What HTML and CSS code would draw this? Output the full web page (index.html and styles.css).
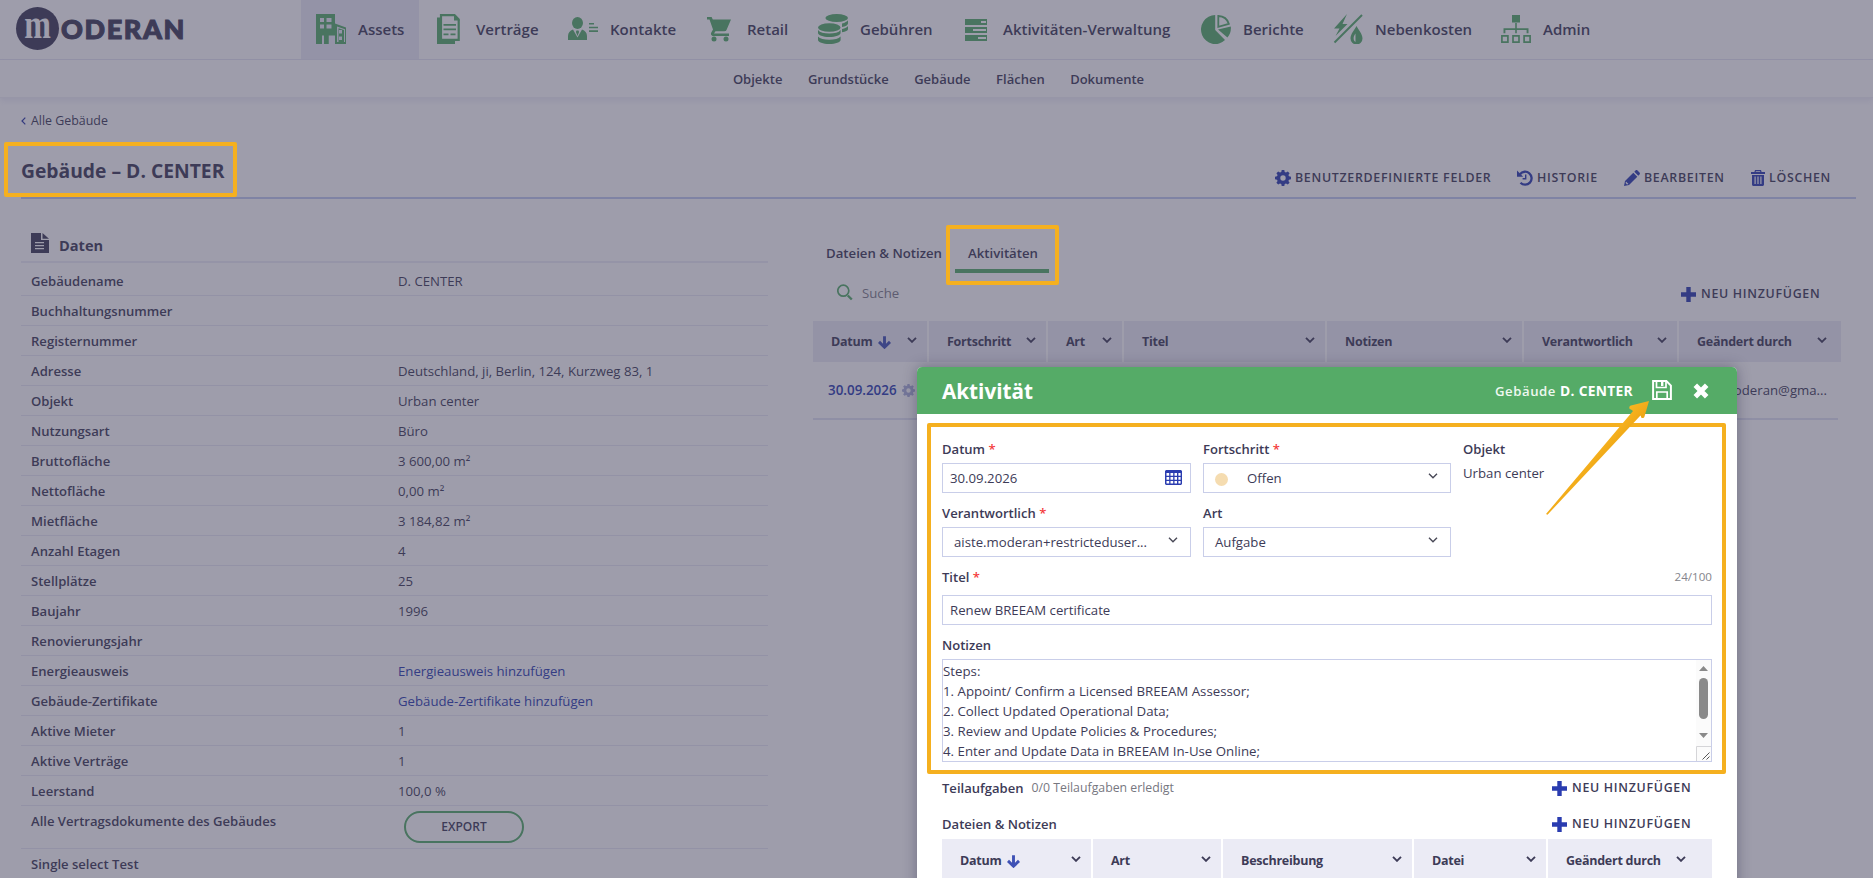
FILE: index.html
```html
<!DOCTYPE html>
<html lang="de">
<head>
<meta charset="utf-8">
<title>Gebäude – D. CENTER</title>
<link rel="stylesheet" href="styles.css">
</head>
<body>
<svg class="defs" aria-hidden="true">
  <symbol id="chev" viewBox="0 0 10 6"><path d="M1 .8l4 4 4-4" fill="none" stroke="currentColor" stroke-width="1.9"/></symbol>
  <symbol id="chev-thin" viewBox="0 0 10 6"><path d="M1 .8l4 4 4-4" fill="none" stroke="currentColor" stroke-width="1.4"/></symbol>
  <symbol id="plus" viewBox="0 0 15 15"><path d="M5.3 0h4.4v5.3H15v4.4H9.700V15H5.300V9.700H0V5.300h5.300z" fill="currentColor"/></symbol>
  <symbol id="down" viewBox="0 0 13 13"><path d="M6.500 0.300v10.500M1 5.900l5.500 5.300 5.500-5.300" fill="none" stroke="currentColor" stroke-width="2.900"/></symbol>
  <symbol id="gear" viewBox="0 0 16 16"><path fill="currentColor" fill-rule="evenodd" d="M6.700 0h2.600l.4 2 1.300.6 1.800-1.200 1.800 1.800-1.200 1.800.6 1.300 2 .4v2.600l-2 .4-.6 1.300 1.200 1.800-1.800 1.800-1.800-1.200-1.300.6-.4 2H6.700l-.4-2-1.300-.6-1.800 1.200-1.800-1.800L2.600 11 2 9.700l-2-.4V6.700l2-.4L2.600 5 1.400 3.200l1.800-1.800L5 2.600 6.300 2zM8 5.300a2.700 2.700 0 100 5.400 2.700 2.700 0 000-5.400z"/></symbol>
</svg>

<header class="topbar">
  <div class="logo">
    <span class="logo-mark"><span class="logo-m">m</span></span>
    <span class="logo-text">ODERAN</span>
  </div>
  <nav class="mainnav">
    <a class="nav-item active"><svg class="nav-icon" viewBox="0 0 30 30"><path fill="currentColor" fill-rule="evenodd" d="M0 0h19v9.500l11 4V30H0zM4 4v4h4V4zm6.500 0v4h5V4zM4 10.500v4h4v-4zm6.500 0v4h5v-4zM6 21.500V30h2.500v-8.500zM12.500 21.500V30H19v-8.500zM21 12.500V28h1.500V14.200L28 16v12h1V15.300zM22 16v3.500h4V16zm0 6.500V26h4v-3.500z"/><path fill="currentColor" d="M8 21h4.500v9H8z"/></svg><span>Assets</span></a>
    <a class="nav-item w2"><svg class="nav-icon" viewBox="0 0 30 30"><path fill="none" stroke="currentColor" stroke-width="2.200" d="M7 1.200h13.500l4.200 4.300v20.300H7z"/><path fill="currentColor" d="M3 3.500h3V27h15v3H3zM20 0l6 6.500h-6zM9.500 10h12.500v1.800H9.500zm0 4.500h12.500v1.800H9.500zm0 5h5v1.800h-5zm7 0h5v1.800h-5z"/></svg><span>Verträge</span></a>
    <a class="nav-item w3"><svg class="nav-icon" viewBox="0 0 30 30"><ellipse cx="9.500" cy="9" rx="5.500" ry="6" fill="currentColor"/><path fill="currentColor" d="M0 26v-4c0-3 2-5.500 5-6.500l4.500 8 4.500-8c3 1 5 3.500 5 6.500v4zM8.500 16.500h2l.6 1.500-1.600 4-1.600-4zM21 9h5v1.600h-5zm0 3.700h9v1.600h-9zm0 3.600h9v1.600h-9z"/></svg><span>Kontakte</span></a>
    <a class="nav-item w4"><svg class="nav-icon" viewBox="0 0 30 30"><path fill="currentColor" d="M2 3h4.600l1.200 2.600H26L21.500 16c-.4.800-1 1.200-2 1.200H10.500L9 19.500h15V22H8.500c-2 0-3.200-1.800-2.200-3.500l1.700-3L4.500 5.500H2z"/><circle cx="9" cy="25" r="2.500" fill="currentColor"/><circle cx="21" cy="25" r="2.500" fill="currentColor"/></svg><span>Retail</span></a>
    <a class="nav-item w5"><svg class="nav-icon" viewBox="0 0 30 30"><g fill="currentColor"><ellipse cx="18.700" cy="4" rx="11.300" ry="4"/><path d="M24 9.500c3-.7 5-2 6-3.300v3.300c0 1.500-2.500 3-6 3.500zM24 15c3-.7 5-1.700 6-3v3.200c0 1.300-2.500 2.500-6 3z"/><ellipse cx="11.300" cy="13.500" rx="11.300" ry="4.300"/><path d="M0 16c2 2.600 6 3.500 11.300 3.500S20.600 18.600 22.600 16v3c0 2.200-5 4-11.300 4S0 21.200 0 19zM0 22.500c2 2.400 6 3.200 11.300 3.200s9.300-.8 11.300-3.200V26c0 2.200-5 4-11.300 4S0 28.200 0 26z"/></g></svg><span>Gebühren</span></a>
    <a class="nav-item w6"><svg class="nav-icon" viewBox="0 0 30 30"><path fill="currentColor" fill-rule="evenodd" d="M4 5h22v6H4zm16 2v2h5V7zM4 13h22v6H4zm8 2v2h13v-2zM4 21h22v6H4zm13 2v2h8v-2z"/></svg><span>Aktivitäten-Verwaltung</span></a>
    <a class="nav-item w7"><svg class="nav-icon" viewBox="0 0 30 30"><path fill="currentColor" d="M14.200 1v15l9.800 10A14.200 14.500 0 1114.200 1z"/><path fill="currentColor" d="M17 15.500l12.800-3c.4 4.500-.8 8-3.400 11z"/><path fill="none" stroke="currentColor" stroke-width="1.800" d="M17.300 2v10.800l10.500-3C26.500 5.500 22.500 2.300 17.300 2z"/></svg><span>Berichte</span></a>
    <a class="nav-item w8"><svg class="nav-icon" viewBox="0 0 30 30"><path fill="none" stroke="currentColor" stroke-width="2" d="M1.500 28.500L29 1"/><path fill="currentColor" d="M14 0L1 14.500h5.500L2.500 22 14.500 10H9.500z"/><path fill="currentColor" fill-rule="evenodd" d="M23.500 12c2 4 6 8 6 12.500a6 6 0 01-12 0c0-4.500 4-8.500 6-12.500zm-1 7.500c-2.500 3-2.500 7 0 8.500z"/></svg><span>Nebenkosten</span></a>
    <a class="nav-item w9"><svg class="nav-icon" viewBox="0 0 30 30"><path fill="currentColor" d="M11 1h8v7.500h-8zM14.200 9h1.600v5.300H27.500v5H25.600v-3.200H15.800v3.200h-1.600v-3.200H4.400v3.200H2.500v-5h11.700z"/><path fill="none" stroke="currentColor" stroke-width="1.700" d="M.9 21.900h6v6.200h-6zM12 21.900h6v6.200h-6zM23.100 21.900h6v6.200h-6z"/></svg><span>Admin</span></a>
  </nav>
</header>
<nav class="subnav"><a>Objekte</a><a>Grundstücke</a><a>Gebäude</a><a>Flächen</a><a>Dokumente</a></nav>

<main class="page">
  <div class="crumb"><svg width="5" height="8" viewBox="0 0 5 8"><path d="M4.300.6L1 4l3.300 3.400" fill="none" stroke="#2b3aa6" stroke-width="1.200"/></svg>Alle Gebäude</div>
  <div class="titlebar">
    <h1>Gebäude – D. CENTER</h1>
    <div class="actions">
      <a class="a1"><svg width="16" height="16"><use href="#gear"/></svg>BENUTZERDEFINIERTE FELDER</a>
      <a class="a2"><svg width="16" height="16" viewBox="0 0 16 16"><path d="M3 4.200A6.500 6.500 0 113.500 12.800" fill="none" stroke="currentColor" stroke-width="2.300"/><path d="M0 .5v6.200h6.200z" fill="currentColor"/><path d="M8.700 4.500v4.200H5.600" fill="none" stroke="currentColor" stroke-width="1.400"/></svg>HISTORIE</a>
      <a class="a3"><svg width="16" height="16" viewBox="0 0 16 16"><path fill="currentColor" fill-rule="evenodd" d="M0 16l1-5L9.300 2.700l4 4L5 15zM10.300 1.700L11.500.5c.6-.6 1.400-.6 2 0l2 2c.6.600.6 1.400 0 2l-1.200 1.200zM2 11.500L1.600 13l1.400 1.400 1.500-.4z"/></svg>BEARBEITEN</a>
      <a class="a4"><svg width="14" height="16" viewBox="0 0 14 16"><path fill="currentColor" fill-rule="evenodd" d="M4 0h6l.6 2H14v2H0V2h3.400zm.9 1.200L4.700 2h4.600l-.2-.8zM1 5h12v9.500c0 .8-.7 1.500-1.500 1.500h-9C1.700 16 1 15.300 1 14.500zm2.500 1.500v7.500h1.200V6.500zm2.900 0v7.500h1.200V6.500zm2.900 0v7.500h1.200V6.500z"/></svg>LÖSCHEN</a>
    </div>
  </div>

  <div class="columns">
    <section class="data">
      <h2><svg width="18" height="20" viewBox="0 0 18 20"><path fill="currentColor" fill-rule="evenodd" d="M0 0h10v7h8v13H0zM4 9v1.300h9V9zm0 3v1.300h9V12zm0 3v1.300h9V15z"/><path fill="currentColor" d="M11.500 0L18 5.700h-6.500z"/></svg><span>Daten</span></h2>
      <dl>
        <div><dt>Gebäudename</dt><dd>D. CENTER</dd></div>
        <div><dt>Buchhaltungsnummer</dt><dd></dd></div>
        <div><dt>Registernummer</dt><dd></dd></div>
        <div><dt>Adresse</dt><dd>Deutschland, ji, Berlin, 124, Kurzweg 83, 1</dd></div>
        <div><dt>Objekt</dt><dd>Urban center</dd></div>
        <div><dt>Nutzungsart</dt><dd>Büro</dd></div>
        <div><dt>Bruttofläche</dt><dd>3 600,00 m²</dd></div>
        <div><dt>Nettofläche</dt><dd>0,00 m²</dd></div>
        <div><dt>Mietfläche</dt><dd>3 184,82 m²</dd></div>
        <div><dt>Anzahl Etagen</dt><dd>4</dd></div>
        <div><dt>Stellplätze</dt><dd>25</dd></div>
        <div><dt>Baujahr</dt><dd>1996</dd></div>
        <div><dt>Renovierungsjahr</dt><dd></dd></div>
        <div><dt>Energieausweis</dt><dd class="link">Energieausweis hinzufügen</dd></div>
        <div><dt>Gebäude-Zertifikate</dt><dd class="link">Gebäude-Zertifikate hinzufügen</dd></div>
        <div><dt>Aktive Mieter</dt><dd>1</dd></div>
        <div><dt>Aktive Verträge</dt><dd>1</dd></div>
        <div><dt>Leerstand</dt><dd>100,0 %</dd></div>
        <div class="tall"><dt>Alle Vertragsdokumente des Gebäudes</dt><dd><button class="export">EXPORT</button></dd></div>
        <div><dt>Single select Test</dt><dd></dd></div>
      </dl>
    </section>

    <section class="side">
      <div class="tabs"><a class="t1">Dateien &amp; Notizen</a><a class="t2">Aktivitäten</a></div>
      <div class="tools">
        <div class="search"><svg width="16" height="17" viewBox="0 0 16 17"><circle cx="6.300" cy="6.700" r="5.500" fill="none" stroke="currentColor" stroke-width="1.700"/><path d="M10.800 11.500l4 4" stroke="currentColor" stroke-width="2.400"/></svg><span>Suche</span></div>
        <a class="add"><svg width="15" height="15"><use href="#plus"/></svg>NEU HINZUFÜGEN</a>
      </div>
      <div class="grid-head grid-main">
        <div><span>Datum</span><svg class="sort"><use href="#down"/></svg><svg class="chev"><use href="#chev"/></svg></div>
        <div>Fortschritt<svg class="chev"><use href="#chev"/></svg></div>
        <div>Art<svg class="chev"><use href="#chev"/></svg></div>
        <div>Titel<svg class="chev"><use href="#chev"/></svg></div>
        <div>Notizen<svg class="chev"><use href="#chev"/></svg></div>
        <div>Verantwortlich<svg class="chev"><use href="#chev"/></svg></div>
        <div>Geändert durch<svg class="chev"><use href="#chev"/></svg></div>
      </div>
      <div class="grid-row"><span class="date">30.09.2026</span><svg class="row-gear"><use href="#gear"/></svg><span class="mail">aiste.moderan@gma...</span></div>
    </section>
  </div>
</main>

<div class="backdrop"></div>

<section class="modal">
  <header class="modal-head">
    <h3>Aktivität</h3>
    <span class="ctx">Gebäude <b>D. CENTER</b></span>
    <svg class="save" width="20" height="20" viewBox="0 0 20 20"><path d="M1.100 1.100h13.300l4.500 4.500v13.300H1.100z" fill="none" stroke="currentColor" stroke-width="2"/><path d="M4.500 1v6.500h9.500V1M4.800 19v-7h10.400v7" fill="none" stroke="currentColor" stroke-width="1.700"/><path d="M9 2h2.400v4H9z" fill="currentColor"/></svg>
    <svg class="close" width="16" height="16" viewBox="0 0 16 16"><path d="M2.300 2.300l11.400 11.400M13.700 2.300L2.300 13.700" stroke="currentColor" stroke-width="5"/></svg>
  </header>
  <div class="form">
    <div class="fields">
      <div class="field"><label>Datum <i>*</i></label><div class="input date-in">30.09.2026<svg width="17" height="15" viewBox="0 0 17 15"><path fill="#2b3db0" fill-rule="evenodd" d="M1 0h15l1 1v13l-1 1H1l-1-1V1zM1.500 3v2.700h2.700V3zm4 0v2.700h2.700V3zm4 0v2.700h2.500V3zm3.900 0v2.700h2.200V3zM1.500 7v2.700h2.700V7zm4 0v2.700h2.700V7zm4 0v2.700h2.500V7zm3.900 0v2.700h2.200V7zM1.500 11v2.600h2.700V11zm4 0v2.600h2.700V11zm4 0v2.600h2.500V11zm3.900 0v2.600h2.200V11z"/></svg></div></div>
      <div class="field"><label>Fortschritt <i>*</i></label><div class="input sel state"><span class="dot"></span>Offen<svg class="chev"><use href="#chev-thin"/></svg></div></div>
      <div class="field"><label>Objekt</label><p class="plain">Urban center</p></div>
      <div class="field"><label>Verantwortlich <i>*</i></label><div class="input sel">aiste.moderan+restricteduser...<svg class="chev"><use href="#chev-thin"/></svg></div></div>
      <div class="field"><label>Art</label><div class="input sel art">Aufgabe<svg class="chev"><use href="#chev-thin"/></svg></div></div>
    </div>
    <div class="label-row title-label"><label>Titel <i>*</i></label><span class="count">24/100</span></div>
    <div class="input">Renew BREEAM certificate</div>
    <div class="label-row notes-label"><label>Notizen</label></div>
    <div class="notes">
      <div class="notes-text">Steps:<br>1. Appoint/ Confirm a Licensed BREEAM Assessor;<br>2. Collect Updated Operational Data;<br>3. Review and Update Policies &amp; Procedures;<br>4. Enter and Update Data in BREEAM In-Use Online;</div>
      <div class="scroll">
        <svg width="15" height="86" viewBox="0 0 15 86"><path d="M3 11l4.500-5L12 11zM3 73h9l-4.500 5z" fill="#8a8a8a"/><rect x="3" y="18" width="9" height="41" rx="4.500" fill="#8a8a8a"/></svg>
        <svg class="resize" width="15" height="15" viewBox="0 0 15 15"><path d="M.5 15V.5H15" fill="none" stroke="#d5d5d8"/><path d="M6.500 13.500l7-7M10.500 13.500l3-3" stroke="#555"/></svg>
      </div>
    </div>
    <div class="label-row sub"><label>Teilaufgaben</label><span class="done">0/0 Teilaufgaben erledigt</span><a class="add"><svg width="15" height="15"><use href="#plus"/></svg>NEU HINZUFÜGEN</a></div>
    <div class="label-row sub files"><label>Dateien &amp; Notizen</label><a class="add"><svg width="15" height="15"><use href="#plus"/></svg>NEU HINZUFÜGEN</a></div>
    <div class="grid-head grid-files">
      <div><span>Datum</span><svg class="sort"><use href="#down"/></svg><svg class="chev"><use href="#chev"/></svg></div>
      <div>Art<svg class="chev"><use href="#chev"/></svg></div>
      <div>Beschreibung<svg class="chev"><use href="#chev"/></svg></div>
      <div>Datei<svg class="chev"><use href="#chev"/></svg></div>
      <div>Geändert durch<svg class="chev"><use href="#chev"/></svg></div>
    </div>
  </div>
</section>

<div class="mark mark-title"></div>
<div class="mark mark-tab"></div>
<div class="mark mark-form"></div>
<svg class="arrow" viewBox="0 0 106 116"><defs><linearGradient id="ag" x1="0" y1="0" x2="1" y2="1"><stop offset=".4" stop-color="#fdb924"/><stop offset=".6" stop-color="#e8a010"/></linearGradient></defs><path fill="url(#ag)" d="M0 114L87 11 85 9.500c-2.500-.5-2-3.500 0-4L103 1 98.500 16.500c-.5 2-3.500 2-3.500 0l-.5-1L1.500 114.700z"/></svg>
</body>
</html>
```
FILE: styles.css
```css
* { box-sizing: border-box; }
html, body { margin: 0; height: 878px; overflow: hidden; }
body { position: relative; width: 1873px; background: #fff; color: #3d3b57; font: 400 13.2px/20px "Open Sans", "Noto Sans", sans-serif; }
h1, h2, h3, p, dl, dd { margin: 0; }
svg { display: block; flex: none; }
.defs { position: absolute; width: 0; height: 0; }

.topbar { display: flex; height: 60px; border-bottom: 1px solid #e6e6f3; }
.logo { display: flex; align-items: center; width: 301px; padding-left: 16px; }
.logo-mark { display: flex; align-items: center; justify-content: center; width: 43px; height: 43px; margin-top: -2px; border-radius: 50%; background: #3d3b57; color: #fff; }
.logo-m { font: 700 32px/43px "Liberation Serif", serif; transform: translateY(-4px) scaleY(1.25); }
.logo-text { margin-left: 2px; margin-top: -2px; font: 900 27px/34px Lato, sans-serif; letter-spacing: 1.6px; -webkit-text-stroke: 1.1px #3d3b57; }
.mainnav { display: flex; }
.nav-item { display: flex; align-items: center; gap: 12px; height: 59px; padding: 0 15px; font-size: 15px; font-weight: 600; white-space: nowrap; width: 118px; }
.nav-item span { padding-bottom: 1px; }
.nav-icon { width: 30px; height: 30px; margin-top: -1px; color: #55ac68; }
.nav-item.active { background: #ebebf7; }
.w2 { width: 134px; }
.w3 { width: 137px; }
.w4 { width: 113px; }
.w5 { width: 143px; }
.w6 { width: 240px; }
.w7 { width: 132px; }
.w8 { width: 168px; }
.w9 { width: 120px; }
.subnav { display: flex; justify-content: center; gap: 25.500px; height: 38px; padding: 9px 0 0 4px; border-bottom: 1px solid #f0f0f7; box-shadow: 0 3px 6px rgba(120, 120, 190, .14); font-size: 13px; font-weight: 600; }

.page { padding: 13px 17px 0 21px; }
.crumb { display: flex; align-items: center; gap: 5px; height: 20px; font-size: 12.400px; }
.titlebar { display: flex; justify-content: space-between; height: 68px; padding-top: 26px; border-bottom: 2px solid #c1cbf0; }
h1 { font-size: 19.300px; line-height: 28px; font-weight: 700; }
.actions { display: flex; height: 20px; margin-top: 11px; font-size: 12.400px; font-weight: 600; letter-spacing: .7px; }
.actions a { display: flex; align-items: center; gap: 4px; white-space: nowrap; }
.actions svg, .add svg { color: #2a3cb0; }
.a1 { width: 242px; }
.a2 { width: 107px; }
.a3 { width: 127px; }
.a4 { width: 105px; }

.columns { display: flex; }
.data { width: 747px; padding-top: 35px; }
h2 { display: flex; align-items: center; gap: 10px; height: 29px; padding: 0 10px 9px; border-bottom: 2px solid #ececf6; font-size: 14.600px; line-height: 20px; font-weight: 700; }
h2 span { margin-top: 4px; }
dl { padding-top: 3px; }
dl > div { display: flex; height: 30px; padding: 5px 10px 0; border-bottom: 1px solid #e9e9f4; }
dl > div.tall { height: 43px; }
dt { width: 367px; font-size: 13.080px; font-weight: 600; }
.link { color: #2a3cb0; }
.export { display: block; width: 120px; height: 32px; margin: 0 0 0 6px; padding: 0; border: 2px solid #55ac68; border-radius: 16px; background: none; color: #3d3b57; font: 600 12px/28px "Open Sans", sans-serif; }

.side { width: 1028px; margin-left: 45px; padding-top: 42px; }
.tabs { display: flex; height: 32px; font-size: 13.200px; font-weight: 600; }
.tabs a { white-space: nowrap; }
.t1 { width: 142px; padding: 2px 0 0 13px; }
.t2 { width: 94px; padding: 2px 0 0 13px; border-bottom: 4px solid #55ac68; }
.tools { display: flex; justify-content: space-between; height: 48px; padding: 10px 0 0 24px; }
.search { display: flex; gap: 9px; color: #7c7c88; }
.search svg { color: #55ac68; margin-top: 1px; }
.add { display: flex; align-items: center; gap: 5px; width: 160px; height: 20px; margin-left: auto; font-size: 12.400px; font-weight: 600; letter-spacing: .7px; white-space: nowrap; }
.tools .add { margin-top: 1px; }

.grid-head { display: grid; gap: 2px; font-size: 12.500px; font-weight: 700; letter-spacing: -.25px; }
.grid-head > div { display: flex; align-items: center; padding: 0 10px 0 18px; background: #ebebf5; white-space: nowrap; }
.chev { width: 10px; height: 6px; margin-left: auto; }
.grid-head .chev { margin-top: -3px; }
.sort { width: 13px; height: 13px; margin: 2px 0 0 6px; color: #3f51b5; }
.grid-main { grid-template-columns: 114px 117px 74px 201px 195px 153px 162px; height: 41px; }
.grid-main > div:last-child { padding-right: 14px; }
.grid-row { display: flex; align-items: center; width: 1025px; height: 58px; border-bottom: 2px solid #e0e2f2; padding: 0 11px 0 15px; }
.date { color: #2a3cb0; font-size: 13.400px; font-weight: 600; }
.row-gear { width: 13px; height: 13px; margin-left: 5px; color: #aab0da; }
.mail { margin-left: auto; }

.backdrop { position: absolute; inset: 0; background: rgba(61, 59, 87, .5); }

.modal { position: absolute; left: 917px; top: 367px; width: 820px; height: 540px; border-radius: 5px 5px 0 0; background: #fff; box-shadow: 0 0 14px rgba(40, 38, 70, .4); overflow: hidden; }
.modal-head { display: flex; align-items: center; height: 47px; padding: 0 28px 0 25px; background: #55ab67; color: #fff; }
h3 { font-size: 20.700px; line-height: 28px; font-weight: 700; }
.ctx { margin-left: auto; font-size: 13.200px; font-weight: 600; letter-spacing: .55px; color: #eef8f0; }
.ctx b { font-size: 13.800px; font-weight: 700; letter-spacing: .3px; color: #fff; }
.save { margin: -2px 0 0 19px; }
.close { margin-left: 21px; }

.form { padding: 25px 25px 0; }
.fields { display: grid; grid-template-columns: 249px 248px 249px; column-gap: 12px; }
.field { height: 64px; }
label { display: block; height: 24px; line-height: 20px; font-size: 13.050px; font-weight: 600; white-space: nowrap; }
label i { font-style: normal; color: #f43a3a; }
.input { display: flex; align-items: center; height: 30px; padding: 0 7px; border: 1px solid #c9cee9; white-space: nowrap; }
.date-in { padding: 0 8px 1px 7px; }
.date-in svg { margin-left: auto; }
.sel { padding: 0 12px 0 11px; }
.sel .chev { margin-top: -4px; color: #4a4a58; }
.dot { width: 13px; height: 13px; margin: 2px 19px 0 0; border-radius: 50%; background: #f5dcb0; }
.plain { height: 20px; }
.label-row { display: flex; }
.title-label { height: 28px; }
.count { margin-left: auto; font-size: 11.600px; color: #85858c; }
.notes-label { height: 34px; padding-top: 10px; }
.notes { display: flex; justify-content: space-between; height: 103px; border: 1px solid #c9cee9; overflow: hidden; }
.notes-text { padding: 1px 0 0; font-size: 13.280px; line-height: 20px; white-space: nowrap; }
.scroll { width: 15px; background: #fbfbfb; }
.sub { height: 36px; padding-top: 16px; }
.done { margin-left: 8px; font-size: 12.300px; color: #77777f; }
.files { height: 41px; }
.grid-files { grid-template-columns: 149px 128px 189px 132px 164px; height: 43px; }
.grid-files > div:last-child { padding-right: 26px; }

.mark { position: absolute; border: 4px solid #f5b01f; border-radius: 2px; }
.mark-title { left: 4px; top: 142px; width: 233px; height: 55px; }
.mark-tab { left: 946px; top: 225px; width: 113px; height: 60px; }
.mark-form { left: 927px; top: 423px; width: 799px; height: 351px; }
.arrow { position: absolute; left: 1546px; top: 400px; width: 106px; height: 116px; }
```
